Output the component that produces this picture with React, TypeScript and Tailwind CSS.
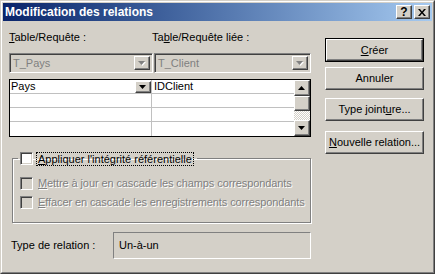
import React from "react";

const RAISED =
  "border border-t-white border-l-white border-b-[#404040] border-r-[#404040] shadow-[inset_-1px_-1px_0_#808080] bg-[#d4d0c8]";
const SUNKEN =
  "border border-t-[#808080] border-l-[#808080] border-b-white border-r-white shadow-[inset_1px_1px_0_#404040,inset_-1px_-1px_0_#d4d0c8]";
const DISABLED_TEXT = "text-[#808080] [text-shadow:1px_1px_0_#fff]";

function Arrow({ up = false, disabled = false }: { up?: boolean; disabled?: boolean }) {
  return (
    <svg width="8" height="5" viewBox="0 0 8 5" className="overflow-visible">
      {disabled && <polygon points="1,1 8,1 4.5,5" fill="#fff" />}
      <polygon
        points={up ? "0,4 7,4 3.5,0" : "0,0 7,0 3.5,4"}
        fill={disabled ? "#808080" : "#000"}
      />
    </svg>
  );
}

function DropButton({ disabled = false }: { disabled?: boolean }) {
  return (
    <div className={`w-[16px] h-full flex items-center justify-center ${RAISED}`}>
      <Arrow disabled={disabled} />
    </div>
  );
}

function Combo({ value, className }: { value: string; className: string }) {
  return (
    <div className={`h-[20px] flex items-stretch p-[2px] bg-[#d4d0c8] ${SUNKEN} ${className}`}>
      <span className="flex-1 pl-[1px] leading-[14px] text-[#808080]">{value}</span>
      <DropButton disabled />
    </div>
  );
}

function CheckBox({ disabled = false }: { disabled?: boolean }) {
  return (
    <span
      className={`inline-block w-[13px] h-[13px] shrink-0 ${SUNKEN} ${disabled ? "bg-[#d4d0c8]" : "bg-white"}`}
    />
  );
}

function Btn({ children, isDefault = false }: { children: React.ReactNode; isDefault?: boolean }) {
  const inner = (
    <div className={`h-full flex items-center justify-center ${RAISED}`}>{children}</div>
  );
  if (isDefault) {
    return <div className="w-[99px] h-[24px] border border-black">{inner}</div>;
  }
  return <div className="w-[99px] h-[23px]">{inner}</div>;
}

export default function App() {
  return (
    <div className="w-[435px] h-[274px] bg-[#d4d0c8] border border-t-[#d4d0c8] border-l-[#d4d0c8] border-b-[#404040] border-r-[#404040] font-['Liberation_Sans',Arial,sans-serif] text-[11px] text-black">
      <div className="h-full flex flex-col border border-t-white border-l-white border-b-[#808080] border-r-[#808080] p-px">
        {/* Title bar */}
        <div className="h-[18px] flex items-center bg-gradient-to-r from-[#0a246a] to-[#a6caf0] pl-[2px] pr-[2px]">
          <span className="flex-1 text-white font-bold text-[12px] leading-[18px]">Modification des relations</span>
          <div className={`w-[16px] h-[14px] flex items-center justify-center font-bold text-[12px] leading-none ${RAISED}`}>?</div>
          <div className={`w-[16px] h-[14px] ml-[2px] flex items-center justify-center ${RAISED}`}>
            <svg width="8" height="7" viewBox="0 0 8 7">
              <path d="M0 0h2l2 2.5 2-2.5h2l-3 3.5 3 3.5h-2l-2-2.5-2 2.5h-2l3-3.5z" fill="#000" />
            </svg>
          </div>
        </div>

        {/* Body */}
        <div className="flex-1 flex">
          <div className="w-[308px] pl-[6px] flex flex-col">
            <div className="mt-[10px] h-[13px] flex leading-[13px]">
              <span className="w-[143px]">
                <u>T</u>able/Requête :
              </span>
              <span>
                Ta<u>b</u>le/Requête liée :
              </span>
            </div>

            <div className="mt-[9px] flex">
              <Combo value="T_Pays" className="w-[144px]" />
              <Combo value="T_Client" className="w-[157px] ml-px" />
            </div>

            {/* Field grid */}
            <div className="mt-[6px] w-[302px] h-[58px] border border-black bg-white flex">
              <div className="flex-1 flex flex-col">
                {[0, 1, 2, 3].map((i) => (
                  <div key={i} className={`h-[14px] flex ${i < 3 ? "border-b border-[#c0c0c0]" : ""}`}>
                    <div className="w-[142px] flex items-center border-r border-[#c0c0c0] pl-[1px] pr-[1px]">
                      {i === 0 && (
                        <>
                          <span className="flex-1 leading-[13px]">Pays</span>
                          <div className="w-[15px] h-[12px] mt-[1px]">
                            <DropButton />
                          </div>
                        </>
                      )}
                    </div>
                    <div className="flex-1 pl-[2px] leading-[13px]">{i === 0 ? "IDClient" : ""}</div>
                  </div>
                ))}
              </div>
              <div className="w-[16px] flex flex-col">
                <div className={`h-[16px] flex items-center justify-center ${RAISED}`}>
                  <Arrow up />
                </div>
                <div className={`h-[15px] ${RAISED}`} />
                <div className="flex-1 [background:repeating-conic-gradient(#fff_0%_25%,#d4d0c8_0%_50%)_0_0/2px_2px]" />
                <div className={`h-[16px] flex items-center justify-center ${RAISED}`}>
                  <Arrow />
                </div>
              </div>
            </div>

            {/* Referential integrity group */}
            <fieldset className="mt-[15px] ml-[3px] w-[299px] border border-[#808080] shadow-[inset_1px_1px_0_#fff,1px_1px_0_#fff] pl-[7px] pb-[13px]">
              <legend className="-ml-[2px] pl-[2px] pr-[4px] flex items-center h-[13px]">
                <CheckBox />
                <span className="ml-[4px] px-px leading-[12px] outline-1 outline-dotted outline-black">
                  <u>A</u>ppliquer l'intégrité référentielle
                </span>
              </legend>
              <div className="mt-[12px] flex items-center h-[13px]">
                <CheckBox disabled />
                <span className={`ml-[5px] leading-[13px] tracking-[-0.1px] ${DISABLED_TEXT}`}>
                  <u>M</u>ettre à jour en cascade les champs correspondants
                </span>
              </div>
              <div className="mt-[6px] flex items-center h-[13px]">
                <CheckBox disabled />
                <span className={`ml-[5px] leading-[13px] tracking-[-0.1px] ${DISABLED_TEXT}`}>
                  <u>E</u>ffacer en cascade les enregistrements correspondants
                </span>
              </div>
            </fieldset>

            <div className="mt-[9px] flex items-center">
              <span className="w-[104px] pl-[2px]">Type de relation :</span>
              <div className="w-[198px] h-[27px] flex items-center pl-[5px] border border-t-[#808080] border-l-[#808080] border-b-white border-r-white">
                Un-à-un
              </div>
            </div>
          </div>

          {/* Buttons */}
          <div className="ml-[14px] pt-[17px] flex flex-col">
            <Btn isDefault>
              <u>C</u>réer
            </Btn>
            <div className="mt-[5px]">
              <Btn>Annuler</Btn>
            </div>
            <div className="mt-[8px]">
              <Btn>
                Type joint<u>u</u>re...
              </Btn>
            </div>
            <div className="mt-[10px]">
              <Btn>
                <u>N</u>ouvelle relation...
              </Btn>
            </div>
          </div>
        </div>
      </div>
    </div>
  );
}
